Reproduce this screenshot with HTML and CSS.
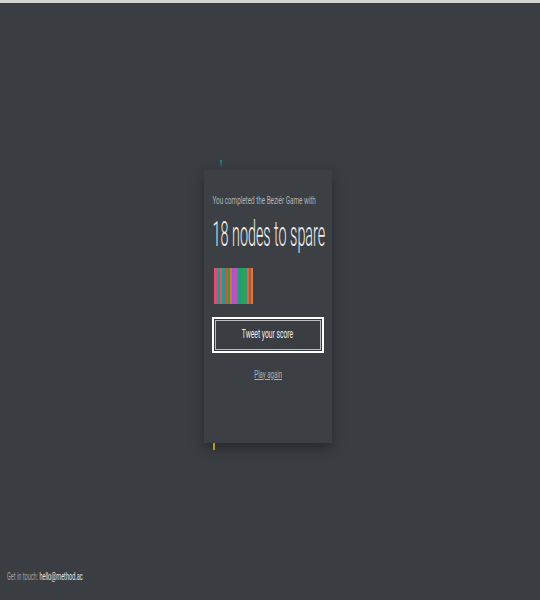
FILE: index.html
```html
<!DOCTYPE html>
<html>
<head>
<meta charset="utf-8">
<link rel="stylesheet" href="styles.css">
</head>
<body>
<div class="topbar"></div>
<main class="stage">
  <div class="card">
    <span class="mark mark-teal"></span>
    <p class="lead">You completed the Beziér Game with</p>
    <h1 class="score">18 nodes to spare</h1>
    <div class="stripes">
      <i style="background:#e0506e"></i><i style="background:#d94c78"></i><i style="background:#1d9e8e"></i><i style="background:#e2566a"></i><i style="background:#2a9a86"></i><i style="background:#2f8f9a"></i><i style="background:#c95a3a"></i><i style="background:#3a9a3a"></i><i style="background:#d2753a"></i><i style="background:#9a5ad8"></i><i style="background:#c252b0"></i><i style="background:#2a9a8a"></i><i style="background:#1f9a7a"></i><i style="background:#27a060"></i><i style="background:#3aa048"></i><i style="background:#2a9a8a"></i><i style="background:#d56a3a"></i><i style="background:#a85a3a"></i><i style="background:#e0763a"></i>
    </div>
    <button class="tweet"><span class="tweet-label">Tweet your score</span></button>
    <div class="again-row"><a class="again" href="#">Play again</a></div>
    <span class="mark mark-yellow"></span>
  </div>
</main>
<footer class="foot"><p class="foot-text">Get in touch: <span class="mail">hello@method.ac</span></p></footer>
</body>
</html>
```
FILE: styles.css
```css
html, body {
  margin: 0;
  padding: 0;
}
body {
  background: #3a3e42;
  font-family: Roboto, "Noto Sans", sans-serif;
  color: #ddd;
  display: flex;
  flex-direction: column;
  height: 600px;
  overflow: hidden;
}
.topbar {
  height: 3px;
  background: #d4d4d4;
  flex: none;
}
.stage {
  flex: 1;
  display: flex;
  padding-left: 204px;
  padding-top: 167px;
}
.card {
  position: relative;
  width: 128px;
  height: 273px;
  background: #3c4044;
  box-shadow: 0 5px 12px rgba(0,0,0,0.35);
  box-sizing: border-box;
  padding: 24px 8px 0 8px;
  display: flex;
  flex-direction: column;
}
.lead {
  margin: 0;
  font-size: 11px;
  line-height: 13px;
  color: #b2b4b6;
  font-weight: 400;
  white-space: nowrap;
  transform: scaleX(0.575);
  transform-origin: 1px 0;
}
.score {
  margin: 8px 0 0 0;
  font-size: 35px;
  font-weight: 300;
  color: #f0f0f0;
  white-space: nowrap;
  line-height: 40px;
  transform: scaleX(0.41);
  transform-origin: 1px 0;
}
.stripes {
  margin: 13px 0 0 2px;
  width: 39px;
  height: 36px;
  display: flex;
}
.stripes i {
  flex: 1;
}
.tweet {
  margin: 13px 0 0 0;
  width: 112px;
  height: 36px;
  background: #3a3e42;
  border: 2px solid #ffffff;
  box-shadow: inset 0 0 0 1px #34383c, inset 0 0 0 2px #b8babc;
  color: #ececec;
  font-family: inherit;
  font-size: 12.5px;
  font-weight: 400;
  padding: 0 0 4px 0;
  display: flex;
  align-items: center;
  justify-content: center;
  white-space: nowrap;
}
.tweet-label {
  display: inline-block;
  transform: scaleX(0.54);
}
.again-row {
  margin-top: 15px;
  display: flex;
  justify-content: center;
  line-height: 13px;
}
.again {
  font-size: 11px;
  color: #b0b2b4;
  text-decoration: underline;
  display: inline-block;
  transform: scaleX(0.55);
  white-space: nowrap;
}
.mark {
  position: absolute;
  width: 2px;
}
.mark-teal {
  left: 16px;
  top: -10px;
  height: 8px;
  background: linear-gradient(#2d7d8a, rgba(45,125,138,0));
}
.mark-yellow {
  left: 9px;
  top: 273px;
  height: 7px;
  background: #b89a20;
}
.foot {
  flex: none;
  padding: 0 0 17px 7px;
}
.foot-text {
  margin: 0;
  font-size: 11px;
  line-height: 13px;
  color: #a0a2a4;
  white-space: nowrap;
  transform: scaleX(0.505);
  transform-origin: 0 0;
}
.mail {
  color: #e4e4e4;
}
```
